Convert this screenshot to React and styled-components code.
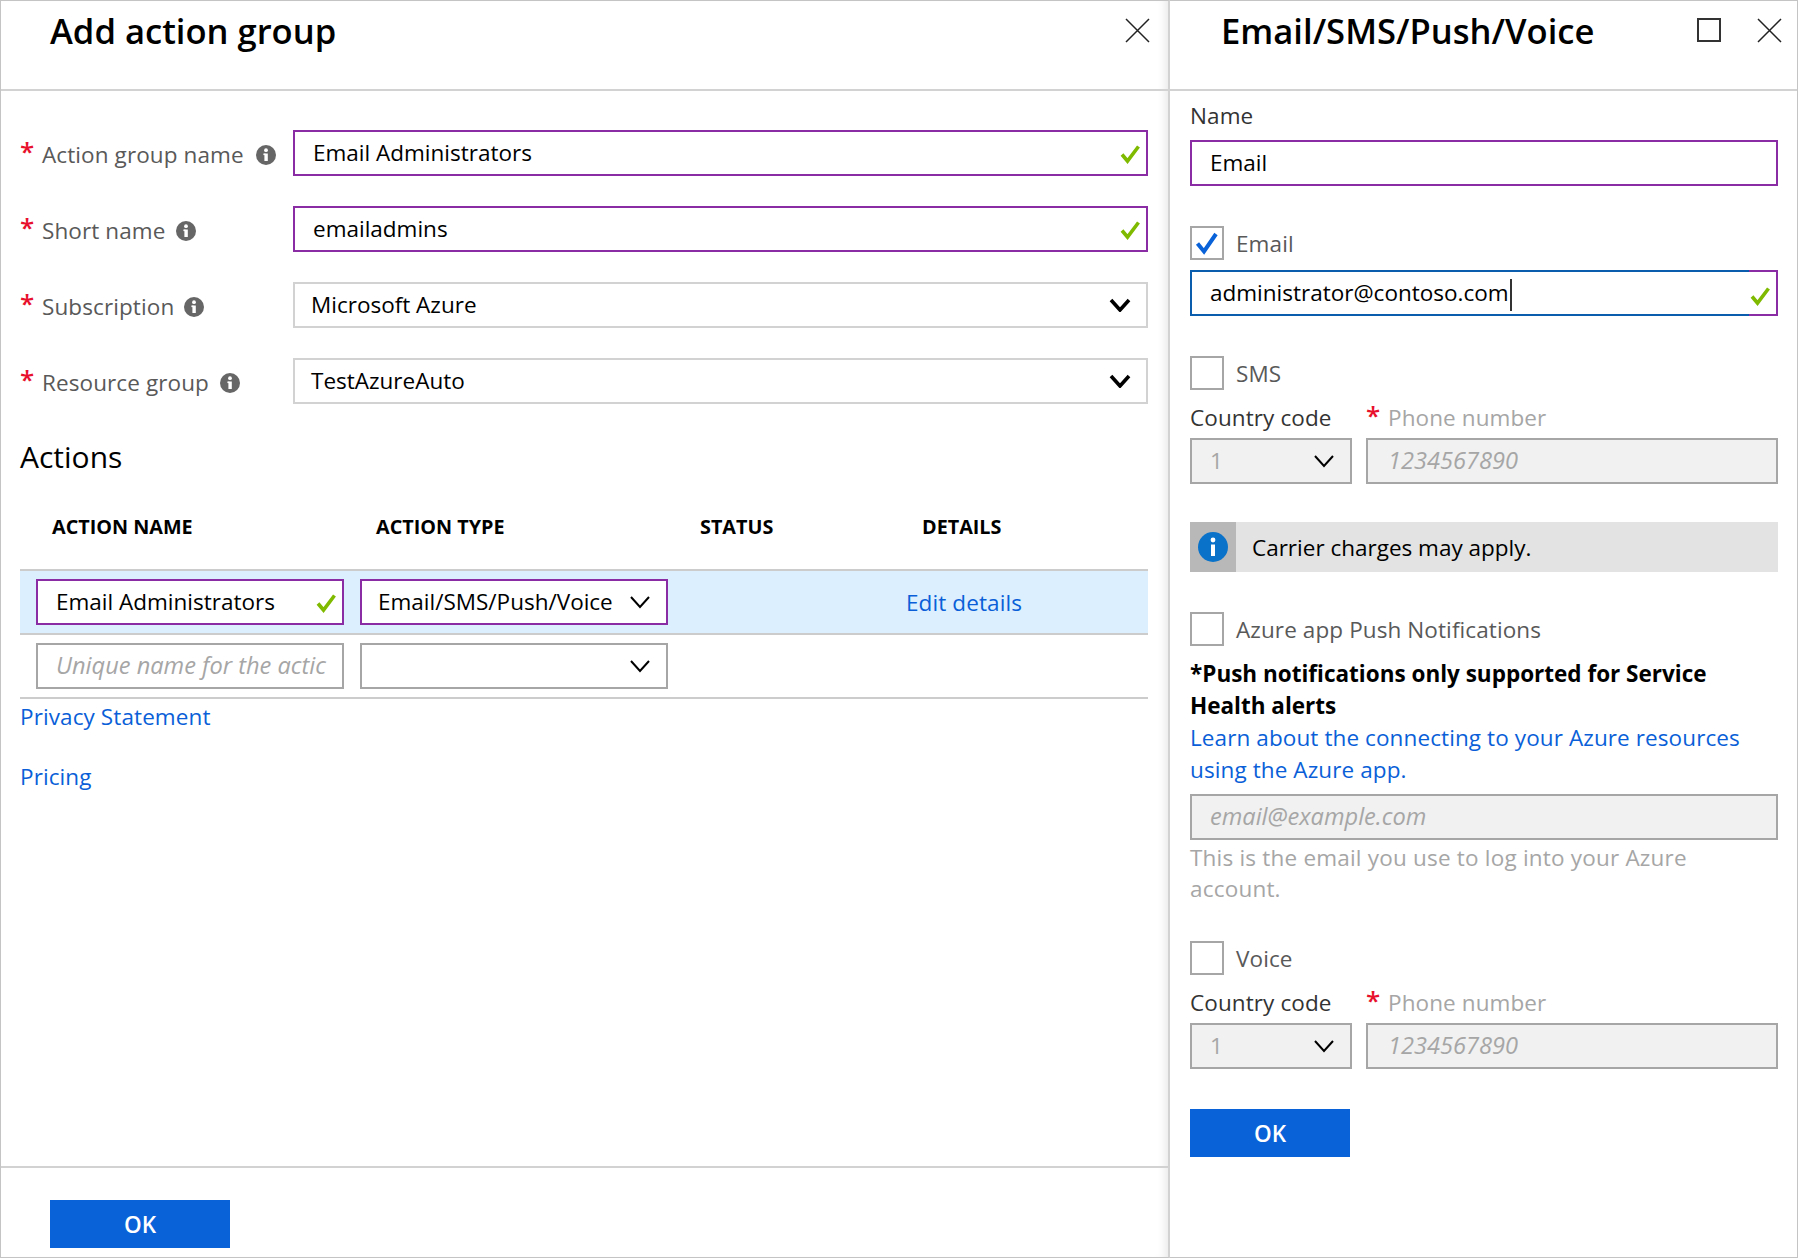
import styled, { createGlobalStyle } from "styled-components";

const GlobalStyle = createGlobalStyle`
  html, body { margin: 0; padding: 0; background: #fff; }
  body { font-family: "Open Sans", "Noto Sans", sans-serif; font-size: 22.5px; color: #000; }
`;

const Page = styled.div`
  display: grid;
  grid-template-columns: 1170px 628px;
  width: 1798px;
  height: 1258px;
  overflow: hidden;
`;

const Blade = styled.section`
  display: flex;
  flex-direction: column;
  box-sizing: border-box;
  height: 1258px;
  border-top: 1px solid #c4c4c4;
  border-bottom: 1px solid #c4c4c4;
  border-left: ${(p) => (p.$main ? "1px solid #c4c4c4" : "0")};
  border-right: ${(p) => (p.$main ? "2px solid #d2d2d2" : "1px solid #c4c4c4")};
  box-shadow: ${(p) => (p.$main ? "inset -9px 0 8px -6px rgba(0, 0, 0, 0.09)" : "none")};
`;

const BladeHeader = styled.header`
  display: flex;
  justify-content: space-between;
  box-sizing: border-box;
  height: 90px;
  flex-shrink: 0;
  padding: 5px ${(p) => p.$right}px 0 ${(p) => p.$left}px;
  border-bottom: 2px solid #d2d2d2;
`;

const Title = styled.h1`
  margin: 0;
  font-size: 34.6px;
  line-height: 50px;
  font-weight: 600;
`;

const HeaderIcons = styled.div`
  display: flex;
  gap: 36px;
  padding-top: 12px;
  align-items: flex-start;
`;

const FormBody = styled.div`
  display: flex;
  flex-direction: column;
  padding: 39px 20px 0 19px;
  flex: 1;
`;

const FormRow = styled.div`
  display: grid;
  grid-template-columns: 273px 1fr;
  align-items: center;
  margin-bottom: 30px;
`;

const RowLabel = styled.div`
  display: flex;
  align-items: center;
  color: #595959;
  padding-top: 3px;
  letter-spacing: 0.1px;
`;

const Star = styled.span`
  color: #e8112d;
  font-size: 26px;
  line-height: 26px;
  width: 22px;
  flex-shrink: 0;
  margin-top: -8px;
  font-weight: 600;
`;

const InfoMark = styled.svg`
  margin-left: ${(p) => p.$gap}px;
  flex-shrink: 0;
`;

const Field = styled.div`
  display: flex;
  align-items: center;
  justify-content: space-between;
  box-sizing: border-box;
  height: 46px;
  margin-top: ${(p) => p.$mt || 0}px;
  padding: 0 5px 2px ${(p) => p.$pl || 18}px;
  white-space: nowrap;
  overflow: hidden;
  border: 2px solid ${(p) => p.$border || "#d2d2d2"};
  background: ${(p) => p.$bg || "#fff"};
  color: ${(p) => p.$color || "#000"};
  font-style: ${(p) => (p.$italic ? "italic" : "normal")};
  font-size: ${(p) => (p.$italic ? "23.6px" : "inherit")};
`;

const FocusField = styled(Field)`
  padding-top: 2px;
  padding-bottom: 0;
  border-image: linear-gradient(to right, #0a5cad 560px, #8a2da5 560px) 1;
`;

const Caret = styled.span`
  display: inline-block;
  width: 2px;
  height: 32px;
  margin-left: 1px;
  background: #333;
  vertical-align: middle;
`;

const SectionTitle = styled.h2`
  margin: 3px 0 0 0;
  font-size: 30px;
  line-height: 40px;
  font-weight: 400;
`;

const ColumnHead = styled.div`
  display: grid;
  grid-template-columns: 324px 324px 222px 1fr;
  padding-left: 32px;
  margin-top: 35px;
  height: 30px;
  font-size: 19.8px;
  line-height: 30px;
  font-weight: 700;
`;

const ActionRow = styled.div`
  display: grid;
  grid-template-columns: 308px 308px 206px 1fr;
  column-gap: 16px;
  align-items: center;
  box-sizing: border-box;
  padding: 8px 0 8px 16px;
  margin-top: ${(p) => (p.$active ? 27 : 0)}px;
  border-top: ${(p) => (p.$active ? "2px solid #ccc" : "0")};
  border-bottom: 2px solid #ccc;
  background: ${(p) => (p.$active ? "#dceffe" : "#fff")};
`;

const TextLink = styled.a`
  display: block;
  color: #0a5fd8;
  line-height: 32px;
  letter-spacing: 0.1px;
  margin-top: ${(p) => p.$mt || 0}px;
  text-decoration: none;
`;

const EditLink = styled(TextLink)`
  padding-top: 2px;
`;

const Footer = styled.footer`
  border-top: 2px solid #d2d2d2;
  height: 91px;
  flex-shrink: 0;
  box-sizing: border-box;
  padding: 32px 0 0 49px;
`;

const OkButton = styled.button`
  display: block;
  width: ${(p) => p.$w}px;
  height: 48px;
  margin-top: ${(p) => p.$mt || 0}px;
  border: 0;
  padding: 0;
  background: #0a62d9;
  color: #fff;
  font-family: inherit;
  font-size: 22.5px;
  font-weight: 600;
`;

const SideBody = styled.div`
  display: flex;
  flex-direction: column;
  padding: 10px 19px 0 20px;
`;

const PlainLabel = styled.div`
  line-height: 30px;
  height: 30px;
  letter-spacing: 0.1px;
  color: ${(p) => p.$color || "#333"};
  margin-top: ${(p) => p.$mt || 0}px;
  display: flex;
  align-items: center;
`;

const CheckRow = styled.label`
  display: flex;
  align-items: center;
  gap: 12px;
  color: #595959;
  letter-spacing: 0.1px;
  margin-top: ${(p) => p.$mt || 0}px;
`;

const CheckBox = styled.span`
  display: flex;
  align-items: center;
  justify-content: center;
  box-sizing: border-box;
  width: 34px;
  height: 34px;
  border: 2px solid #a6a6a6;
  background: #fff;
`;

const PhoneGrid = styled.div`
  display: grid;
  grid-template-columns: 162px 1fr;
  column-gap: 14px;
  margin-top: ${(p) => p.$mt || 0}px;
`;

const SmallStar = styled(Star)`
  margin-top: -6px;
`;

const Notice = styled.div`
  display: flex;
  align-items: center;
  height: 50px;
  margin-top: 38px;
  background: #e3e3e3;
`;

const NoticeIcon = styled.div`
  display: flex;
  align-items: center;
  justify-content: center;
  width: 46px;
  height: 50px;
  background: #b8b8b8;
  margin-right: 16px;
`;

const BoldNote = styled.div`
  margin-top: 12px;
  font-weight: 700;
  line-height: 32px;
  color: #000;
`;

const Hint = styled.div`
  margin-top: 2px;
  line-height: 31px;
  letter-spacing: 0.2px;
  color: #a6a6a6;
`;

const ChevronMark = styled.svg`
  margin: 2px 10px 0 0;
  flex-shrink: 0;
`;

const TickMark = styled.svg`
  margin-top: 4px;
  flex-shrink: 0;
`;

const CloseIcon = () => (
  <svg width="25" height="25" viewBox="0 0 25 25" fill="none" stroke="#222" strokeWidth="1.5">
    <path d="M1 1l23 23M24 1L1 24" />
  </svg>
);

const MaxIcon = () => (
  <svg width="24" height="24" viewBox="0 0 24 24" fill="none" stroke="#333" strokeWidth="2">
    <rect x="1" y="1" width="22" height="22" />
  </svg>
);

const Info = ({ gap = 10 }) => (
  <InfoMark $gap={gap} width="20" height="20" viewBox="0 0 20 20">
    <circle cx="10" cy="10" r="10" fill="#666" />
    <rect x="8.4" y="8.5" width="3.4" height="7.5" fill="#fff" />
    <rect x="7.4" y="8.5" width="2" height="1.6" fill="#fff" />
    <circle cx="10" cy="5.2" r="1.9" fill="#fff" />
  </InfoMark>
);

const Tick = () => (
  <TickMark width="21" height="19" viewBox="0 0 21 19" fill="none" stroke="#7fba00" strokeWidth="3.6">
    <path d="M2 9.5l5.5 6.5L18.5 1.5" />
  </TickMark>
);

const BlueTick = () => (
  <svg width="24" height="24" viewBox="0 0 24 24" fill="none" stroke="#0a62d9" strokeWidth="4">
    <path d="M2.5 12.5l6.5 8L21 3" />
  </svg>
);

const Chevron = ({ heavy }) => (
  <ChevronMark width="22" height="14" viewBox="0 0 22 14" fill="none" stroke="#000" strokeWidth={heavy ? 3.6 : 2}>
    <path d="M2 2l9 10 9-10" />
  </ChevronMark>
);

const BlueInfo = () => (
  <svg width="30" height="30" viewBox="0 0 30 30">
    <circle cx="15" cy="15" r="15" fill="#0a72c9" />
    <circle cx="15" cy="8" r="2.4" fill="#fff" />
    <rect x="13" y="12.5" width="4" height="11.5" fill="#fff" />
  </svg>
);

const purple = "#8a2da5";
const muted = "#a6a6a6";

const PhoneFields = ({ mt }) => (
  <>
    <PhoneGrid $mt={mt}>
      <PlainLabel>Country code</PlainLabel>
      <PlainLabel $color={muted}>
        <SmallStar>*</SmallStar>Phone number
      </PlainLabel>
    </PhoneGrid>
    <PhoneGrid $mt={5}>
      <Field $border={muted} $bg="#f1f1f1" $color={muted}>
        1
        <Chevron />
      </Field>
      <Field $border={muted} $bg="#f1f1f1" $color={muted} $italic $pl={20}>
        1234567890
      </Field>
    </PhoneGrid>
  </>
);

export default function App() {
  return (
    <Page>
      <GlobalStyle />
      <Blade $main>
        <BladeHeader $left={49} $right={18}>
          <Title>Add action group</Title>
          <HeaderIcons>
            <CloseIcon />
          </HeaderIcons>
        </BladeHeader>
        <FormBody>
          <FormRow>
            <RowLabel>
              <Star>*</Star>Action group name<Info gap={12} />
            </RowLabel>
            <Field $border={purple}>
              Email Administrators
              <Tick />
            </Field>
          </FormRow>
          <FormRow>
            <RowLabel>
              <Star>*</Star>Short name<Info />
            </RowLabel>
            <Field $border={purple}>
              emailadmins
              <Tick />
            </Field>
          </FormRow>
          <FormRow>
            <RowLabel>
              <Star>*</Star>Subscription<Info />
            </RowLabel>
            <Field $pl={16}>
              Microsoft Azure
              <Chevron heavy />
            </Field>
          </FormRow>
          <FormRow>
            <RowLabel>
              <Star>*</Star>Resource group<Info gap={11} />
            </RowLabel>
            <Field $pl={16}>
              TestAzureAuto
              <Chevron heavy />
            </Field>
          </FormRow>
          <SectionTitle>Actions</SectionTitle>
          <ColumnHead>
            <span>ACTION NAME</span>
            <span>ACTION TYPE</span>
            <span>STATUS</span>
            <span>DETAILS</span>
          </ColumnHead>
          <ActionRow $active>
            <Field $border={purple}>
              Email Administrators
              <Tick />
            </Field>
            <Field $border={purple} $pl={16}>
              Email/SMS/Push/Voice
              <Chevron />
            </Field>
            <span />
            <EditLink>Edit details</EditLink>
          </ActionRow>
          <ActionRow>
            <Field $border={muted} $color={muted} $italic>
              Unique name for the actic
            </Field>
            <Field $border={muted}>
              <span />
              <Chevron />
            </Field>
          </ActionRow>
          <TextLink $mt={2}>Privacy Statement</TextLink>
          <TextLink $mt={28}>Pricing</TextLink>
        </FormBody>
        <Footer>
          <OkButton $w={180}>OK</OkButton>
        </Footer>
      </Blade>

      <Blade>
        <BladeHeader $left={51} $right={15}>
          <Title>Email/SMS/Push/Voice</Title>
          <HeaderIcons>
            <MaxIcon />
            <CloseIcon />
          </HeaderIcons>
        </BladeHeader>
        <SideBody>
          <PlainLabel>Name</PlainLabel>
          <Field $border={purple} $mt={9}>
            Email
          </Field>
          <CheckRow $mt={40}>
            <CheckBox>
              <BlueTick />
            </CheckBox>
            Email
          </CheckRow>
          <FocusField $mt={10}>
            <span>
              administrator@contoso.com
              <Caret />
            </span>
            <Tick />
          </FocusField>
          <CheckRow $mt={40}>
            <CheckBox />
            SMS
          </CheckRow>
          <PhoneFields mt={13} />
          <Notice>
            <NoticeIcon>
              <BlueInfo />
            </NoticeIcon>
            Carrier charges may apply.
          </Notice>
          <CheckRow $mt={40}>
            <CheckBox />
            Azure app Push Notifications
          </CheckRow>
          <BoldNote>
            *Push notifications only supported for Service
            <br />
            Health alerts
          </BoldNote>
          <TextLink>Learn about the connecting to your Azure resources</TextLink>
          <TextLink>using the Azure app.</TextLink>
          <Field $border={muted} $bg="#f1f1f1" $color={muted} $italic $mt={8}>
            email@example.com
          </Field>
          <Hint>
            This is the email you use to log into your Azure
            <br />
            account.
          </Hint>
          <CheckRow $mt={37}>
            <CheckBox />
            Voice
          </CheckRow>
          <PhoneFields mt={13} />
          <OkButton $w={160} $mt={40}>
            OK
          </OkButton>
        </SideBody>
      </Blade>
    </Page>
  );
}
